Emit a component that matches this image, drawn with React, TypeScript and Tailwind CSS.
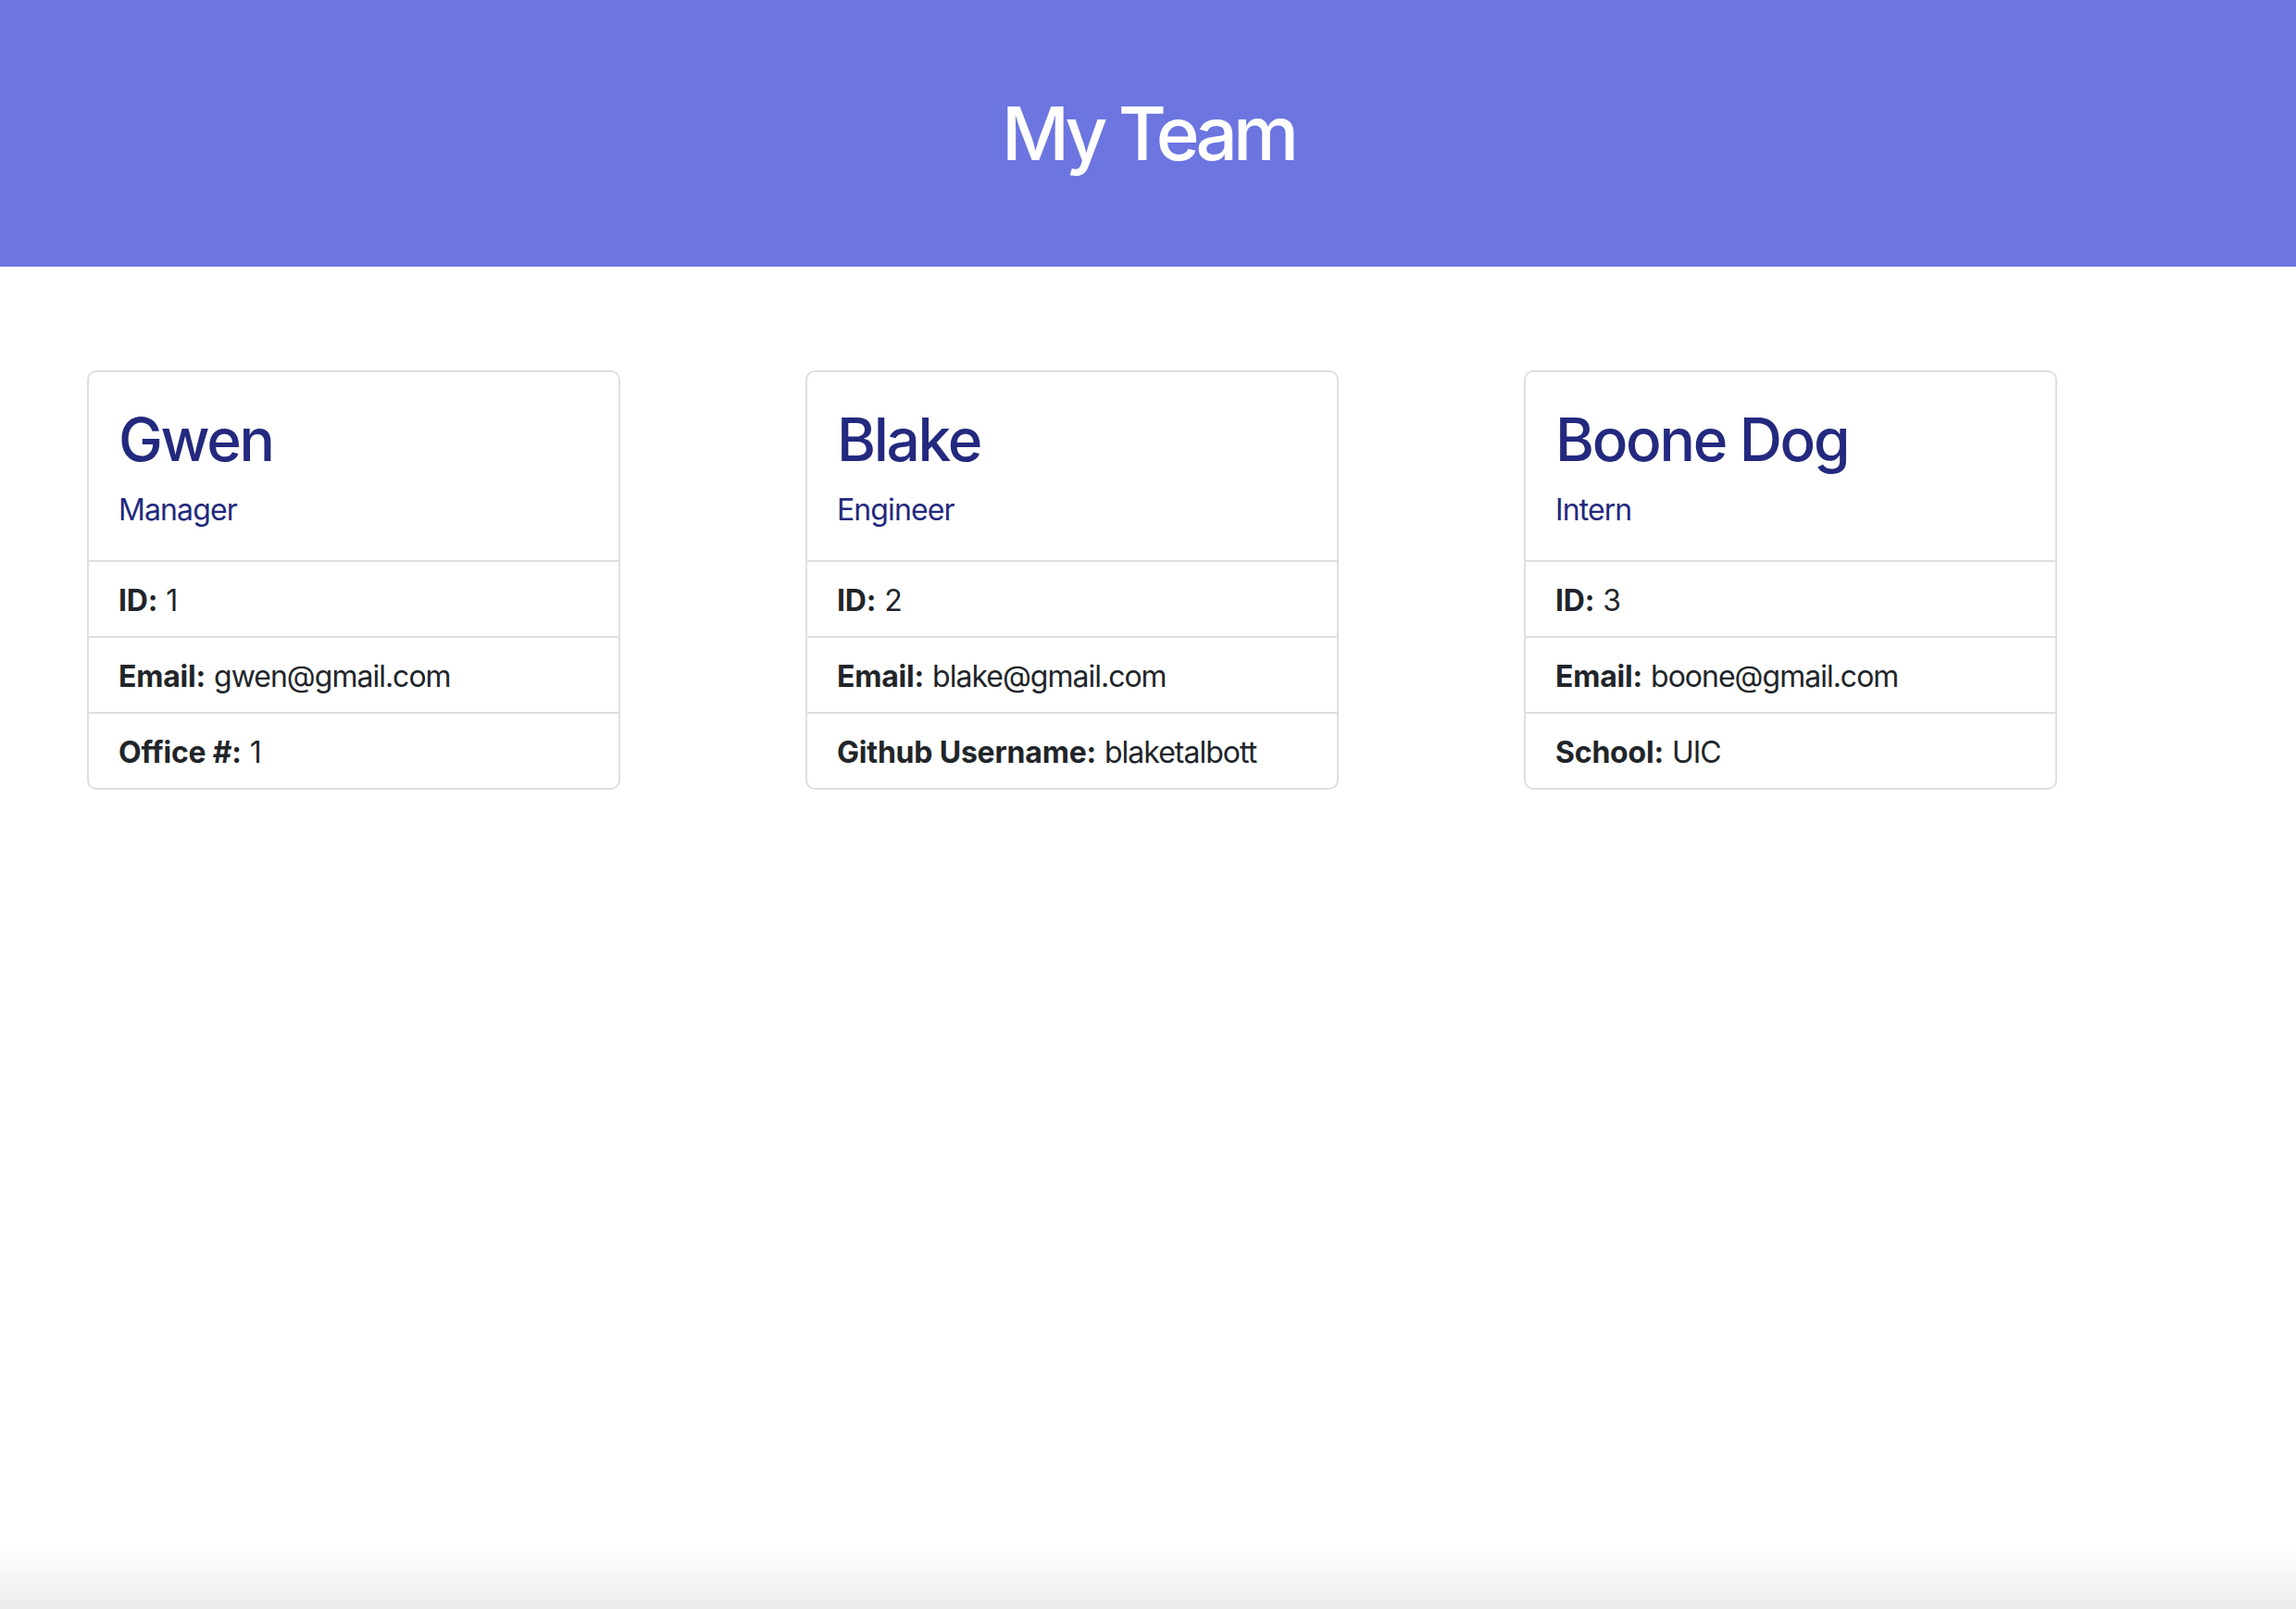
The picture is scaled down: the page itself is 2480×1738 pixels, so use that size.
import React from "react";

type Member = {
  name: string;
  role: string;
  id: string;
  email: string;
  extraLabel: string;
  extraValue: string;
};

const team: Member[] = [
  { name: "Gwen", role: "Manager", id: "1", email: "gwen@gmail.com", extraLabel: "Office #:", extraValue: "1" },
  { name: "Blake", role: "Engineer", id: "2", email: "blake@gmail.com", extraLabel: "Github Username:", extraValue: "blaketalbott" },
  { name: "Boone Dog", role: "Intern", id: "3", email: "boone@gmail.com", extraLabel: "School:", extraValue: "UIC" },
];

function Row({ label, value }: { label: string; value: string }) {
  return (
    <div className="border-t-2 border-[#dfdfdf] px-[32px] pt-[18px] pb-[14px] text-[32px] leading-[48px] text-[#212529]">
      <strong className="font-bold tracking-[-0.2px]">{label}</strong>{" "}
      <span className="tracking-[-1px]">{value}</span>
    </div>
  );
}

function Card({ m }: { m: Member }) {
  return (
    <div className="w-[576px] shrink-0 rounded-[10px] border-2 border-[#dfdfdf] bg-white">
      <div className="px-[32px] pt-[35px] pb-[32px]">
        <h2 className="mb-[18px] text-[64px] font-medium leading-[76.8px] tracking-[-2.3px] text-[#23297e]">{m.name}</h2>
        <h6 className="mt-0 mb-[3px] text-[32px] font-normal leading-[38.4px] tracking-[-0.9px] text-[#23297e]">{m.role}</h6>
      </div>
      <Row label="ID:" value={m.id} />
      <Row label="Email:" value={m.email} />
      <Row label={m.extraLabel} value={m.extraValue} />
    </div>
  );
}

export default function App() {
  return (
    <div
      className="flex min-h-[1738px] flex-col bg-white"
      style={{ fontFamily: "Inter, 'Noto Sans', 'Liberation Sans', sans-serif" }}
    >
      <header className="flex h-[288px] items-center justify-center bg-[#6c75e0]">
        <h1 className="text-[80px] font-medium leading-[96px] tracking-[-5px] text-white">My Team</h1>
      </header>
      <main className="flex flex-1 items-start gap-[200px] pl-[94px] pt-[112px]">
        {team.map((m) => (
          <Card key={m.name} m={m} />
        ))}
      </main>
      <div className="h-[65px] bg-gradient-to-b from-white to-[#ebebeb]" />
    </div>
  );
}
